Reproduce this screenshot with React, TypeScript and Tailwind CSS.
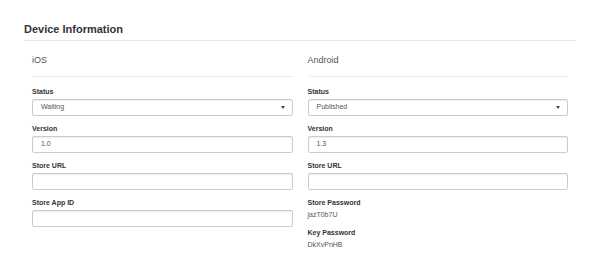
import React from 'react';

const Field = ({ label, value = '', select = false }: { label: string; value?: string; select?: boolean }) => {
  return (
    <div className="mb-[8px]">
      <label className="block text-[7px] leading-[10px] font-bold text-[#333] mb-[2px]">{label}</label>
      <div className="h-[17px] flex items-center justify-between px-[8px] border border-[#ccc] rounded-[2px] bg-white shadow-[inset_0_1px_1px_rgba(0,0,0,0.075)] text-[7px] text-[#555]">
        <span>{value}</span>
        {select && (
          <svg width="4" height="3" viewBox="0 0 4 3" className="mr-[-1px]">
            <path d="M0 0h4L2 3z" fill="#444" />
          </svg>
        )}
      </div>
    </div>
  );
};

const Static = ({ label, value }: { label: string; value: string }) => {
  return (
    <div className="mb-[8px]">
      <div className="text-[7px] leading-[10px] font-bold text-[#333] mb-[2px]">{label}</div>
      <div className="text-[7px] leading-[10px] text-[#555]">{value}</div>
    </div>
  );
};

const App = () => {
  return (
    <div className="w-[600px] h-[255px] bg-white pt-[23px] px-[24px] font-['Liberation_Sans',Arial,sans-serif] overflow-hidden">
      <h2 className="text-[11px] leading-[13px] font-bold text-[#333] pb-[4px] border-b border-[#e5e5e5]">Device Information</h2>

      <div className="grid grid-cols-2 gap-[15px] px-[8px]">
        {/* iOS */}
        <div>
          <h4 className="mt-[14px] text-[9px] leading-[11px] text-[#555] pb-[10px] border-b border-[#eee] mb-[10px]">iOS</h4>
          <Field label="Status" value="Waiting" select />
          <Field label="Version" value="1.0" />
          <Field label="Store URL" />
          <Field label="Store App ID" />
        </div>

        {/* Android */}
        <div>
          <h4 className="mt-[14px] text-[9px] leading-[11px] text-[#555] pb-[10px] border-b border-[#eee] mb-[10px]">Android</h4>
          <Field label="Status" value="Published" select />
          <Field label="Version" value="1.3" />
          <Field label="Store URL" />
          <Static label="Store Password" value="jazT0b7U" />
          <Static label="Key Password" value="DkXvPnHB" />
        </div>
      </div>
    </div>
  );
};

export default App;
